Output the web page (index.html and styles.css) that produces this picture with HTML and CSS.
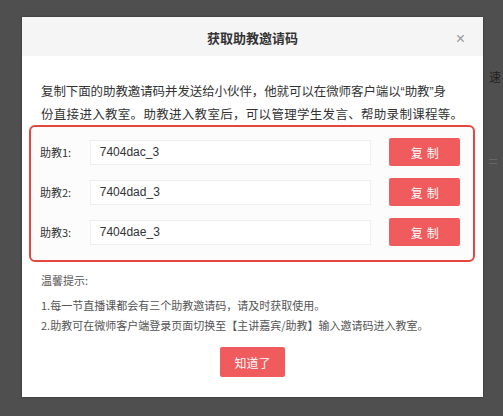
FILE: index.html
```html
<!DOCTYPE html>
<html lang="zh-CN">
<head>
  <meta charset="UTF-8" />
  <meta name="viewport" content="width=device-width, initial-scale=1.0" />
  <title>获取助教邀请码</title>
  <link rel="stylesheet" href="styles.css">
</head>
<body>
  <div class="modal">
    <div class="modal-head">
      <h1>获取助教邀请码</h1>
      <span class="close">&times;</span>
    </div>

    <div class="modal-body">
      <p class="intro">
        <span class="intro-line">复制下面的助教邀请码并发送给小伙伴，他就可以在微师客户端以<span class="quote">“</span>助教<span class="quote">”</span>身</span>
        <span class="intro-last">份直接进入教室。助教进入教室后，可以管理学生发言、帮助录制课程等。</span>
      </p>

      <div class="codes">
        <div class="code-row">
          <span class="code-label">助教1:</span>
          <input class="code-input" type="text" value="7404dac_3" readonly>
          <button class="copy-btn">复制</button>
        </div>
        <div class="code-row">
          <span class="code-label">助教2:</span>
          <input class="code-input" type="text" value="7404dad_3" readonly>
          <button class="copy-btn">复制</button>
        </div>
        <div class="code-row">
          <span class="code-label">助教3:</span>
          <input class="code-input" type="text" value="7404dae_3" readonly>
          <button class="copy-btn">复制</button>
        </div>
      </div>

      <div class="tips">
        <p class="tips-title">温馨提示:</p>
        <p>1.每一节直播课都会有三个助教邀请码，请及时获取使用。</p>
        <p>2.助教可在微师客户端登录页面切换至【主讲嘉宾/助教】输入邀请码进入教室。</p>
      </div>

      <div class="foot">
        <button class="ok-btn">知道了</button>
      </div>
    </div>
  </div>

  <div class="page-edge">
    <span class="edge-text">速</span>
    <span class="edge-line"></span>
  </div>
</body>
</html>
```

FILE: styles.css
```css
body {
  margin: 0;
  padding: 17px 0 0 22px;
  height: 416px;
  box-sizing: border-box;
  overflow: hidden;
  background: #4f4f4f;
  font-family: 'Noto Sans CJK SC', 'Liberation Sans', sans-serif;
  color: #333;
  display: flex;
  align-items: flex-start;
}

.modal {
  width: 461px;
  height: 380px;
  background: #fff;
  flex-shrink: 0;
  box-shadow: 0 0 2px rgba(0, 0, 0, 0.4);
}

.modal-head {
  height: 39px;
  background: #f5f5f5;
  display: flex;
  align-items: center;
  justify-content: center;
  position: relative;
}

.modal-head h1 {
  margin: 2px 0 0;
  font-size: 13px;
  font-weight: bold;
  color: #333;
}

.close {
  position: absolute;
  right: 18px;
  top: 14px;
  font-family: 'Liberation Sans', sans-serif;
  font-size: 16px;
  line-height: 16px;
  color: #999;
}

.modal-body {
  padding: 24px 0 0;
}

.intro {
  margin: 0 0 1px;
  padding: 0 0 0 19px;
  width: 418px;
  font-size: 12.5px;
  line-height: 21px;
  color: #333;
}

.intro-line {
  display: block;
  white-space: nowrap;
  letter-spacing: -0.1px;
}

.intro-last {
  display: block;
  white-space: nowrap;
  letter-spacing: 0.3px;
}

.quote {
  font-family: 'Liberation Sans', sans-serif;
}

.codes {
  margin: 0 8px 0 7px;
  border: 2px solid #e5473f;
  border-radius: 6px;
  padding: 11px 13px 14px 9px;
  display: flex;
  flex-direction: column;
  gap: 12px;
  background: #fcfcfc;
}

.code-row {
  display: flex;
  align-items: center;
  height: 28px;
}

.code-label {
  width: 50px;
  font-size: 11px;
  color: #333;
}

.code-input {
  width: 283px;
  height: 25px;
  box-sizing: border-box;
  border: 1px solid #efefef;
  background: #fff;
  padding: 0 9px;
  font-family: 'Liberation Sans', sans-serif;
  font-size: 12px;
  color: #333;
  outline: none;
}

.copy-btn {
  margin-left: 18px;
  width: 71px;
  height: 28px;
  border: none;
  border-radius: 2px;
  background: #f05b5d;
  color: #fff;
  font-family: 'Noto Sans CJK SC', sans-serif;
  font-size: 12px;
  letter-spacing: 4px;
  padding: 0 0 0 4px;
}

.tips {
  padding: 8px 19px 0;
  font-size: 11px;
  color: #555;
}

.tips p {
  margin: 0;
  line-height: 20px;
}

.tips .tips-title {
  margin-bottom: 5px;
}

.foot {
  display: flex;
  justify-content: center;
  padding-top: 12px;
}

.ok-btn {
  width: 65px;
  height: 30px;
  border: none;
  border-radius: 2px;
  background: #f05b5d;
  color: #fff;
  font-family: 'Noto Sans CJK SC', sans-serif;
  font-size: 12px;
}

.page-edge {
  display: flex;
  flex-direction: column;
  padding: 51px 0 0 6px;
}

.edge-text {
  font-size: 12px;
  color: #222;
  white-space: nowrap;
}

.edge-line {
  margin-top: 74px;
  width: 8px;
  height: 3px;
  border-top: 1px solid #666;
  border-bottom: 1px solid #666;
}
```
